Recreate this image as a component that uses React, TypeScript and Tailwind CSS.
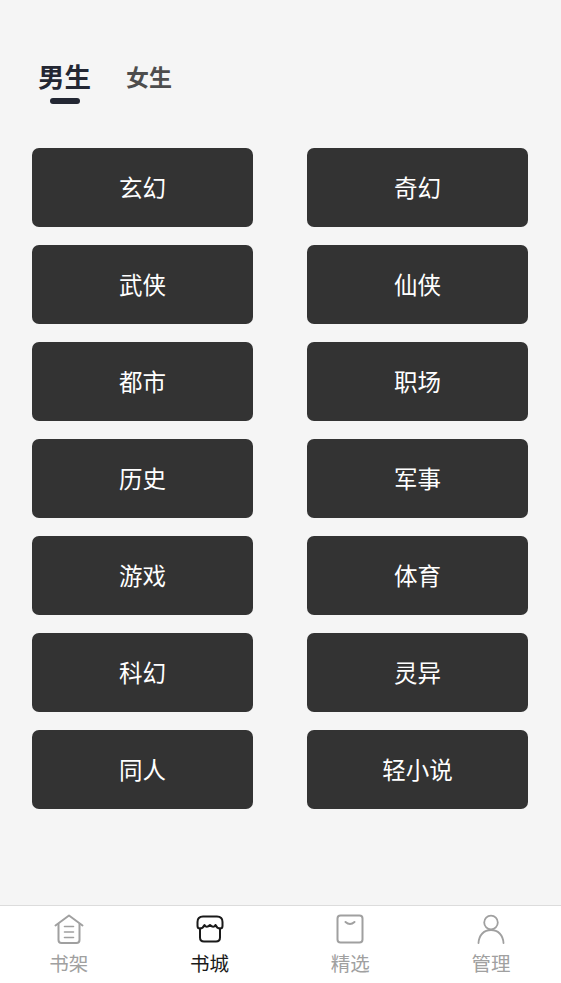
import React from 'react';

const font = "font-['Noto_Sans_CJK_SC','Noto_Sans',sans-serif]";

const genres = [
  '玄幻', '奇幻',
  '武侠', '仙侠',
  '都市', '职场',
  '历史', '军事',
  '游戏', '体育',
  '科幻', '灵异',
  '同人', '轻小说',
];

function ShelfIcon() {
  return (
    <svg width="30" height="30" viewBox="0 0 30 30" fill="none" stroke="currentColor" strokeWidth="2" strokeLinecap="round" strokeLinejoin="round">
      <path d="M1.5 11.5 L15 1.5 L28.5 11.5" />
      <path d="M4.5 10 V26 Q4.5 29 7.5 29 H22.5 Q25.5 29 25.5 26 V10" />
      <path d="M10.5 12.5 H19.5 M10.5 18 H19.5 M10.5 23.5 H19.5" strokeWidth="1.6" />
    </svg>
  );
}

function StoreIcon() {
  return (
    <svg width="28" height="28" viewBox="0 0 28 28" fill="none" stroke="currentColor" strokeWidth="2" strokeLinecap="round" strokeLinejoin="round">
      <path d="M7 1.5 H21 Q26.5 1.5 26.5 7 V11 Q26.5 13.5 24 13.5 Q21 13.5 19.5 10 Q17.5 13.5 14 10 Q10.5 13.5 8.5 10 Q7 13.5 4 13.5 Q1.5 13.5 1.5 11 V7 Q1.5 1.5 7 1.5 Z" />
      <path d="M4 13.5 V22.5 Q4 26.5 8 26.5 H20 Q24 26.5 24 22.5 V13.5" />
    </svg>
  );
}

function BagIcon() {
  return (
    <svg width="28" height="30" viewBox="0 0 28 30" fill="none" stroke="currentColor" strokeWidth="2" strokeLinecap="round" strokeLinejoin="round">
      <rect x="1.5" y="1.5" width="25" height="27" rx="3" />
      <path d="M9.5 8 Q14 12 18.5 8" />
    </svg>
  );
}

function UserIcon() {
  return (
    <svg width="28" height="30" viewBox="0 0 28 30" fill="none" stroke="currentColor" strokeWidth="1.8" strokeLinecap="round">
      <circle cx="14" cy="8.5" r="6.8" />
      <path d="M1.5 29 C2 21 7 16 14 16 C21 16 26 21 26.5 29" />
    </svg>
  );
}

const tabs = [
  { label: '书架', icon: <ShelfIcon />, active: false },
  { label: '书城', icon: <StoreIcon />, active: true },
  { label: '精选', icon: <BagIcon />, active: false },
  { label: '管理', icon: <UserIcon />, active: false },
];

export default function App() {
  return (
    <div className={`${font} flex h-[983px] w-full flex-col overflow-hidden bg-[#f5f5f5]`}>
      <div className="flex-1 overflow-hidden">
        <div className="flex items-start pl-[38px] pt-[58px]">
          <div className="flex flex-col items-center">
            <span className="text-[26.5px] leading-[36px] font-bold text-[#232733]">男生</span>
            <span className="mt-[4px] h-[6px] w-[30px] rounded-full bg-[#232733]" />
          </div>
          <span className="ml-[35px] mt-[1px] text-[23px] leading-[34px] font-bold text-[#4d4d4d]">女生</span>
        </div>

        <div className="mt-[44px] grid grid-cols-2 gap-x-[54px] gap-y-[18.5px] pl-[32px] pr-[33px]">
          {genres.map(name => (
            <button key={name} className="flex h-[78.5px] items-center justify-center rounded-[7px] bg-[#333333] text-[23.5px] text-white">
              {name}
            </button>
          ))}
        </div>
      </div>

      <div className="h-[78px] border-t border-[#dcdcdc] bg-white">
        <div className="-ml-[1.5px] grid w-[563px] grid-cols-4">
          {tabs.map(tab => (
            <div key={tab.label} className={`flex flex-col items-center pt-[6px] ${tab.active ? 'text-[#1a1a1a]' : 'text-[#a0a0a0]'}`}>
              <div className="flex h-[34px] items-center justify-center">{tab.icon}</div>
              <span className="mt-[3px] text-[19.5px] leading-[28px]">{tab.label}</span>
            </div>
          ))}
        </div>
      </div>
    </div>
  );
}
